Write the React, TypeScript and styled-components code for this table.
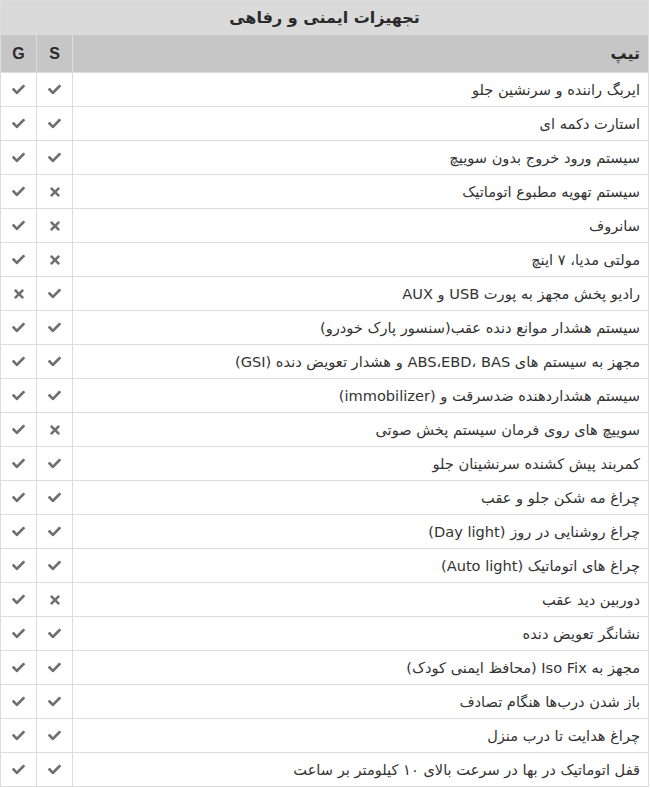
import React from "react"
import styled, { createGlobalStyle } from "styled-components"
import { FaCheck, FaTimes } from "react-icons/fa"

const GlobalStyle = createGlobalStyle`
  html, body {
    margin: 0;
    padding: 0;
    background: #fff;
  }
  body {
    font-family: "DejaVu Sans", "Noto Sans", sans-serif;
  }
`

const Table = styled.table`
  direction: rtl;
  width: 649px;
  border-collapse: collapse;
  border: 1px solid #dcdcdc;
  color: #333;
  font-size: 14.6px;
  table-layout: fixed;
`

const TitleCell = styled.th`
  background: #dadada;
  height: 33px;
  padding: 0;
  font-size: 16px;
  font-weight: bold;
  text-align: center;
  border: 1px solid #dcdcdc;
  color: #2a2a2a;
`

const HeadCell = styled.th<{ $center?: boolean }>`
  background: #c6c6c6;
  height: 37px;
  padding: 0 8px;
  font-size: 16px;
  font-family: ${(p) => (p.$center ? '"Liberation Sans", Arial, sans-serif' : "inherit")};
  font-weight: bold;
  text-align: ${(p) => (p.$center ? "center" : "right")};
  border: 1px solid #dcdcdc;
  color: #2a2a2a;
`

const Cell = styled.td`
  height: 33px;
  padding: 0 8px;
  text-align: right;
  border: 1px solid #dcdcdc;
  white-space: nowrap;
`

const MarkCell = styled.td`
  height: 33px;
  padding: 0;
  text-align: center;
  border: 1px solid #dcdcdc;
  color: #707070;
  line-height: 0;
`

type Row = { name: string; s: boolean; g: boolean }

const rows: Row[] = [
  { name: "ایربگ راننده و سرنشین جلو", s: true, g: true },
  { name: "استارت دکمه ای", s: true, g: true },
  { name: "سیستم ورود خروج بدون سوییچ", s: true, g: true },
  { name: "سیستم تهویه مطبوع اتوماتیک", s: false, g: true },
  { name: "سانروف", s: false, g: true },
  { name: "مولتی مدیا، ۷ اینچ", s: false, g: true },
  { name: "رادیو پخش مجهز به پورت USB و AUX", s: true, g: false },
  { name: "سیستم هشدار موانع دنده عقب(سنسور پارک خودرو)", s: true, g: true },
  { name: "مجهز به سیستم های ABS،EBD، BAS و هشدار تعویض دنده (GSI)", s: true, g: true },
  { name: "سیستم هشداردهنده ضدسرقت و (immobilizer)", s: true, g: true },
  { name: "سوییچ های روی فرمان سیستم پخش صوتی", s: false, g: true },
  { name: "کمربند پیش کشنده سرنشینان جلو", s: true, g: true },
  { name: "چراغ مه شکن جلو و عقب", s: true, g: true },
  { name: "چراغ روشنایی در روز (Day light)", s: true, g: true },
  { name: "چراغ های اتوماتیک (Auto light)", s: true, g: true },
  { name: "دوربین دید عقب", s: false, g: true },
  { name: "نشانگر تعویض دنده", s: true, g: true },
  { name: "مجهز به Iso Fix (محافظ ایمنی کودک)", s: true, g: true },
  { name: "باز شدن درب‌ها هنگام تصادف", s: true, g: true },
  { name: "چراغ هدایت تا درب منزل", s: true, g: true },
  { name: "قفل اتوماتیک در بها در سرعت بالای ۱۰ کیلومتر بر ساعت", s: true, g: true },
]

function Mark({ on }: { on: boolean }) {
  return on ? <FaCheck size={13} /> : <FaTimes size={14} />
}

export default function App() {
  return (
    <>
      <GlobalStyle />
      <Table>
        <colgroup>
          <col />
          <col style={{ width: 36 }} />
          <col style={{ width: 36 }} />
        </colgroup>
        <thead>
          <tr>
            <TitleCell colSpan={3}>تجهیزات ایمنی و رفاهی</TitleCell>
          </tr>
          <tr>
            <HeadCell>تیپ</HeadCell>
            <HeadCell $center>S</HeadCell>
            <HeadCell $center>G</HeadCell>
          </tr>
        </thead>
        <tbody>
          {rows.map((r) => (
            <tr key={r.name}>
              <Cell>{r.name}</Cell>
              <MarkCell>
                <Mark on={r.s} />
              </MarkCell>
              <MarkCell>
                <Mark on={r.g} />
              </MarkCell>
            </tr>
          ))}
        </tbody>
      </Table>
    </>
  )
}
